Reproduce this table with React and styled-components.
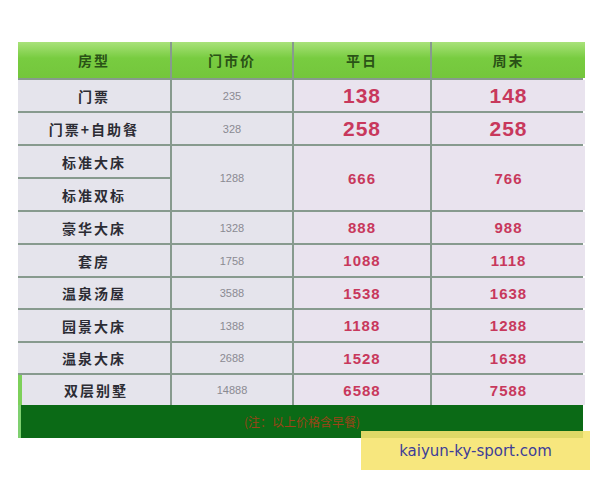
import styled, { createGlobalStyle } from 'styled-components'

const GlobalStyle = createGlobalStyle`
    body {
        margin: 0;
        background: #ffffff;
        font-family: "Liberation Sans", "Noto Sans CJK SC", sans-serif;
    }
`

const Page = styled.div`
    position: relative;
    width: 600px;
    height: 480px;
    padding: 42px 0 0 18px;
    box-sizing: border-box;
`

const PriceGrid = styled.div`
    display: grid;
    grid-template-columns: 152px 120px 136px 153px;
    grid-template-rows: 36px 31px 31px 31px 31px 31px 31px 30px 31px 30px 30px;
    gap: 2px;
    width: 565px;
    background: #879a8e;
`

const HeadCell = styled.div`
    display: flex;
    align-items: center;
    justify-content: center;
    background: linear-gradient(#a9e27a, #78cc40 45%, #74c63c);
    color: #2a5216;
    font-family: "Noto Sans CJK SC", serif;
    font-weight: 700;
    font-size: 14px;
    letter-spacing: 2px;
`

const Cell = styled.div`
    display: flex;
    align-items: center;
    justify-content: center;
    background: ${p => (p.$price ? '#e9e3ee' : '#e5e4ec')};
    grid-row: ${p => p.$span ? `span ${p.$span}` : 'auto'};
    border-left: ${p => (p.$edge ? '4px solid #7dd05a' : 'none')};
`

const RoomName = styled.span`
    color: #2c2c34;
    font-family: "Noto Sans CJK SC", serif;
    font-weight: 700;
    font-size: 14px;
    letter-spacing: 2px;
`

const ListPrice = styled.span`
    color: #8a8a92;
    font-size: 11px;
`

const Price = styled.span`
    color: #c8385c;
    font-weight: 700;
    font-size: ${p => (p.$big ? '21px' : '15px')};
    letter-spacing: 1px;
`

const FooterBar = styled.div`
    display: flex;
    align-items: center;
    justify-content: center;
    width: 565px;
    height: 33px;
    background: #0b6a16;
    border-left: 3px solid #7fd070;
    box-sizing: border-box;
    color: #9a4418;
    font-family: "Noto Sans CJK SC", sans-serif;
    font-size: 12px;
`

const Watermark = styled.div`
    position: absolute;
    left: 361px;
    top: 431px;
    width: 229px;
    height: 39px;
    display: flex;
    align-items: center;
    justify-content: center;
    background: rgba(246, 228, 112, 0.9);
    color: #3d3d98;
    font-family: "DejaVu Sans", sans-serif;
    font-size: 15px;
`

const rooms = [
    { name: '门票', list: '235', weekday: '138', weekend: '148', big: true },
    { name: '门票+自助餐', list: '328', weekday: '258', weekend: '258', big: true },
    { name: '标准大床', list: '1288', weekday: '666', weekend: '766', span: 2 },
    { name: '标准双标', merged: true },
    { name: '豪华大床', list: '1328', weekday: '888', weekend: '988' },
    { name: '套房', list: '1758', weekday: '1088', weekend: '1118' },
    { name: '温泉汤屋', list: '3588', weekday: '1538', weekend: '1638' },
    { name: '园景大床', list: '1388', weekday: '1188', weekend: '1288' },
    { name: '温泉大床', list: '2688', weekday: '1528', weekend: '1638' },
    { name: '双层别墅', list: '14888', weekday: '6588', weekend: '7588', edge: true },
]

export default function App() {
    return (
        <>
            <GlobalStyle />
            <Page>
                <PriceGrid>
                    <HeadCell>房型</HeadCell>
                    <HeadCell>门市价</HeadCell>
                    <HeadCell>平日</HeadCell>
                    <HeadCell>周末</HeadCell>
                    {rooms.map(room => (
                        room.merged ? (
                            <Cell key={room.name}><RoomName>{room.name}</RoomName></Cell>
                        ) : (
                            [
                                <Cell key={room.name + 'n'} $edge={room.edge}><RoomName>{room.name}</RoomName></Cell>,
                                <Cell key={room.name + 'l'} $span={room.span}><ListPrice>{room.list}</ListPrice></Cell>,
                                <Cell key={room.name + 'd'} $span={room.span} $price><Price $big={room.big}>{room.weekday}</Price></Cell>,
                                <Cell key={room.name + 'e'} $span={room.span} $price><Price $big={room.big}>{room.weekend}</Price></Cell>,
                            ]
                        )
                    ))}
                </PriceGrid>
                <FooterBar>(注：以上价格含早餐)</FooterBar>
                <Watermark>kaiyun-ky-sport.com</Watermark>
            </Page>
        </>
    )
}
